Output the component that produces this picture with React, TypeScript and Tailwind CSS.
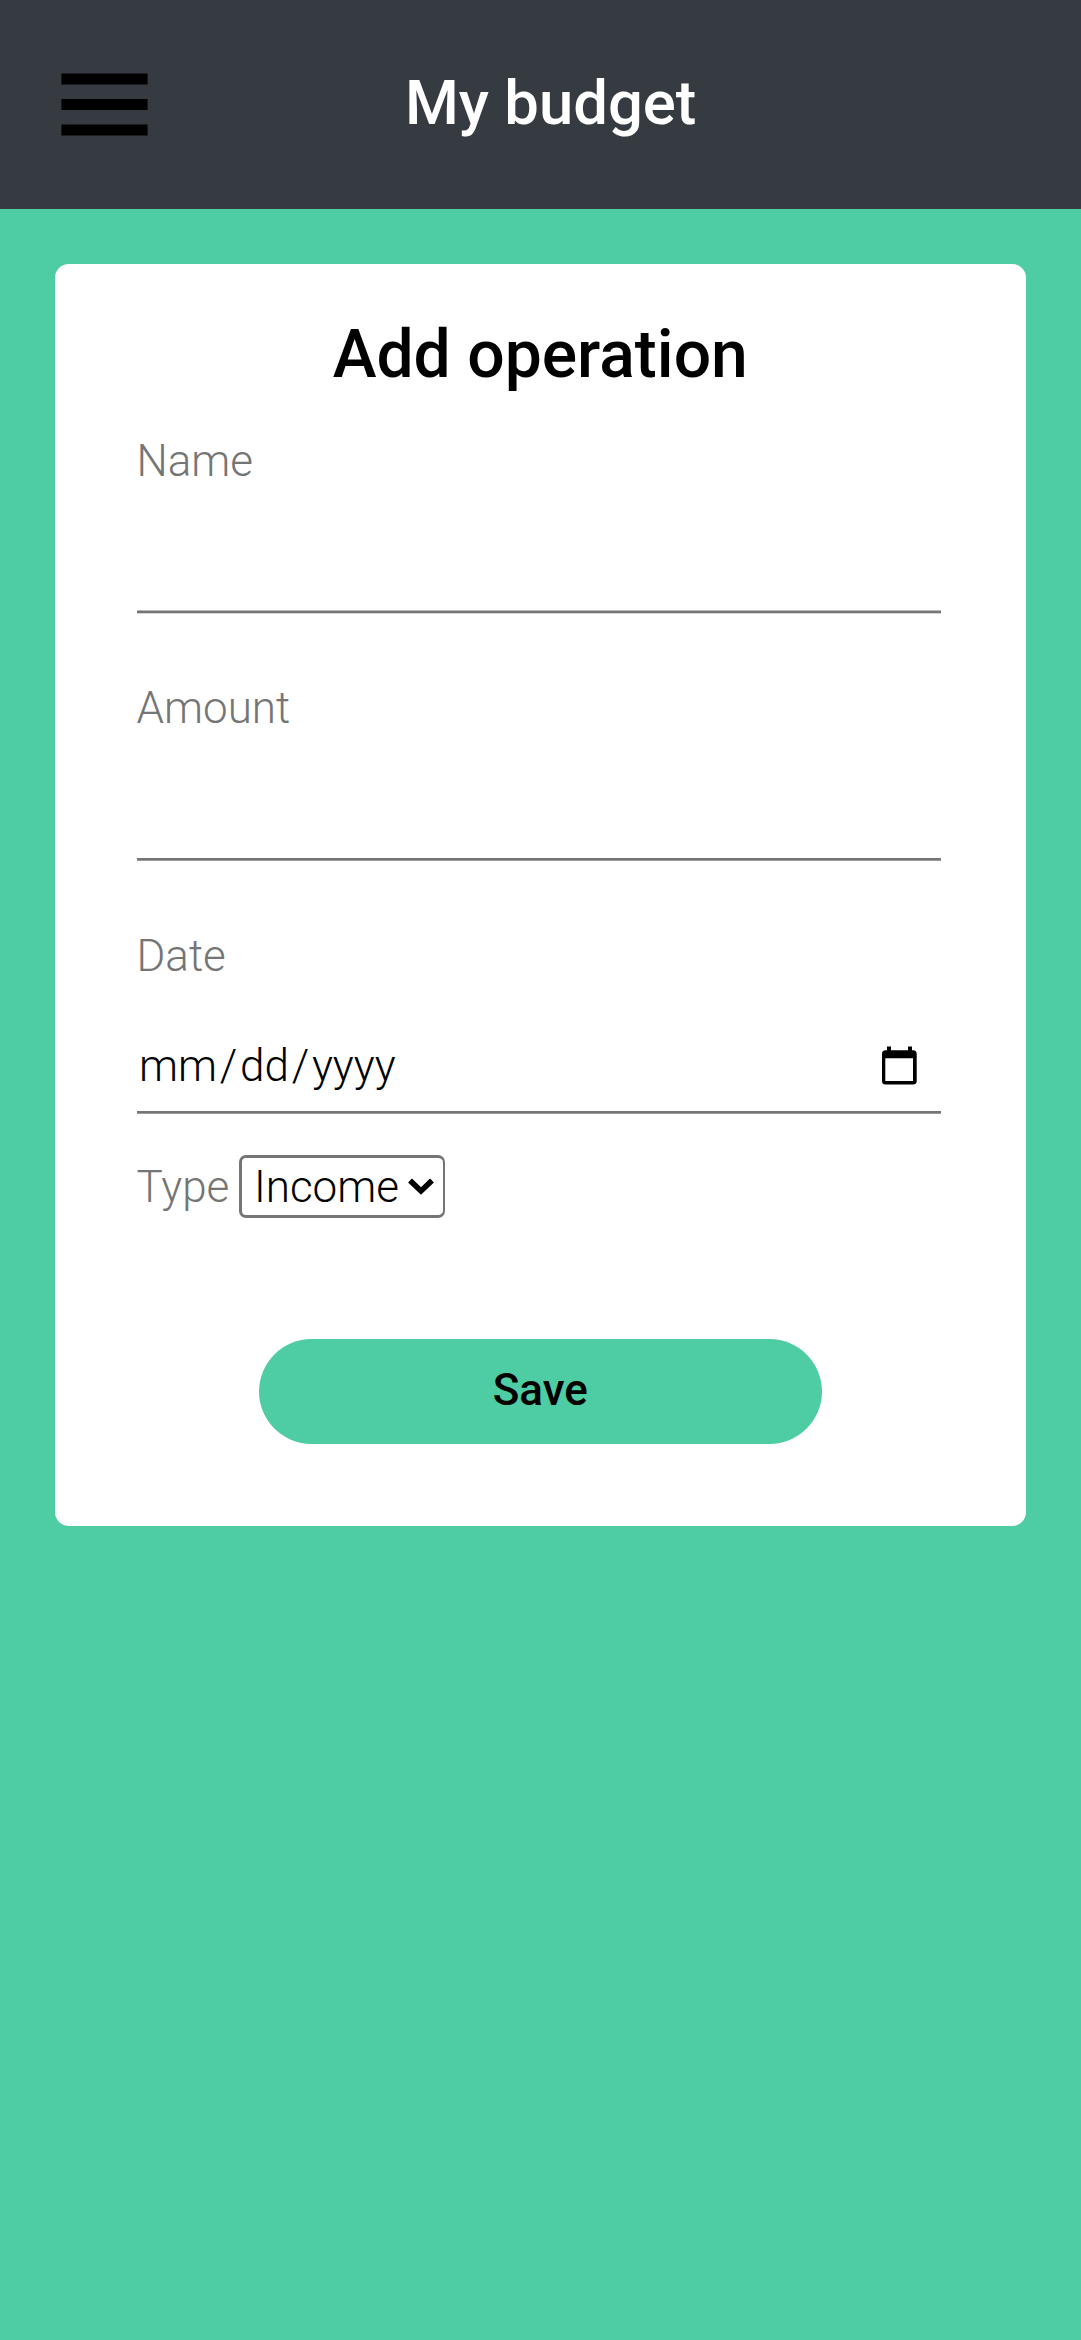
import React from "react";

function Field({ label, className, children }: { label: string; className: string; children?: React.ReactNode }) {
  return (
    <label className={"flex flex-col text-[#757575] " + className}>
      <span className="-ml-[0.5px] block h-[52px] leading-[52px]">{label}</span>
      {children}
    </label>
  );
}

export default function App() {
  return (
    <div className="flex min-h-[2340px] w-[1081px] flex-col bg-[#4ecca3] font-['Roboto',sans-serif] text-[44px] font-light text-black">
      <header className="flex h-[209px] items-center bg-[#363a41] pl-[61px]">
        <button aria-label="Open menu" className="h-[63px] w-[87px]">
          <svg viewBox="0 0 87 63" className="block h-full w-full">
            <path d="M.4.6h86.200v10.900H.4zM.4 26h86.200v11H.4zM.4 51.500h86.200v10.900H.4z" />
          </svg>
        </button>
        <h1 className="mb-[4px] ml-[257px] h-[72px] text-[61.6px] leading-[72px] font-medium text-white">My budget</h1>
      </header>

      <form className="mt-[55px] ml-[55px] flex h-[1262px] w-[970.5px] flex-col rounded-[14px] bg-white pt-[52px] pr-[85px] pl-[82px]">
        <h2 className="h-[78px] pl-[3px] text-center text-[66px] leading-[78px] font-medium">Add operation</h2>
        <Field label="Name" className="mt-[41px] h-[179px]">
          <input className="h-[123px] w-full outline-none" />
          <span className="h-[4px] shrink-0 border-t border-b border-t-[#bababa] border-b-[#d5d5d5] bg-[#757575]" />
        </Field>
        <Field label="Amount" className="mt-[68px] h-[179px]">
          <input className="h-[124px] w-full outline-none" />
          <span className="h-[3px] shrink-0 border-b border-[#9a9a9a] bg-[#757575]" />
        </Field>
        <Field label="Date" className="mt-[69px] h-[184px]">
          <span className="mt-[39px] flex h-[90px] items-start justify-between pr-[24px] pl-[2px] text-black">
            <span className="mt-[19px] flex h-[52px] leading-[52px]">
              <span>mm</span>
              <span className="px-[2.75px]">/</span>
              <span>dd</span>
              <span className="px-[2.75px]">/</span>
              <span>yyyy</span>
            </span>
            <svg viewBox="0 0 35 39" className="mt-[25px] h-[39px] w-[35px]">
              <path fillRule="evenodd" d="M5 .5h4v3.800h17V.5h4v3.800h1q3.700 0 3.700 3.700v27q0 3.500-3.700 3.500H3.700q-3.700 0-3.700-3.500V8q0-3.700 3.700-3.700H5zM3.300 12.300v22.700h27.700V12.300z" />
            </svg>
          </span>
          <span className="h-[3px] shrink-0 border-b border-[#9a9a9a] bg-[#757575]" />
        </Field>
        <div className="mt-[41px] flex h-[63px] text-[#757575]">
          <span className="mt-[6px] -ml-[0.5px] w-[102.5px] leading-[52px]">Type</span>
          <button type="button" className="flex h-[63px] w-[206px] items-start rounded-[7px] border-3 border-r-2 border-[#757575] pl-[12px] text-black">
            <span className="mt-[3px] w-[154px] text-left leading-[52px]">Income</span>
            <svg viewBox="0 0 26 17" className="mt-[20px] h-[17px] w-[26px] shrink-0">
              <path d="M2 2.500 13 13 24 2.500" fill="none" stroke="black" strokeWidth="5.6" />
            </svg>
          </button>
        </div>
        <button type="button" className="mt-[121px] ml-[121.5px] h-[105px] w-[563.5px] rounded-full bg-[#4ecca3] leading-[100px] font-medium"><span className="-mt-[4px] block">Save</span></button>
      </form>
    </div>
  );
}
